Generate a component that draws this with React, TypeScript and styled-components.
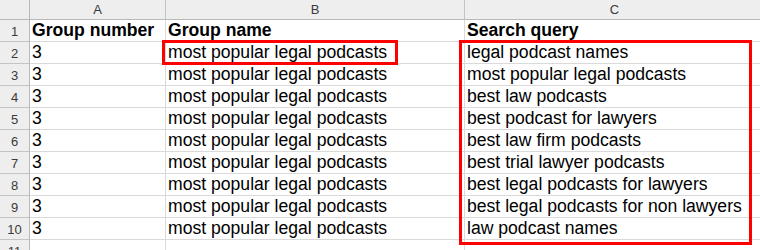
import { Fragment } from "react";
import { createGlobalStyle, styled } from "styled-components";

const rows = [
  "legal podcast names",
  "most popular legal podcasts",
  "best law podcasts",
  "best podcast for lawyers",
  "best law firm podcasts",
  "best trial lawyer podcasts",
  "best legal podcasts for lawyers",
  "best legal podcasts for non lawyers",
  "law podcast names",
];

const GlobalStyle = createGlobalStyle`
  html, body {
    margin: 0;
    padding: 0;
    background: #ffffff;
    overflow: hidden;
  }
  * { box-sizing: border-box; }
`;

const Sheet = styled.div`
  position: relative;
  width: 760px;
  height: 250px;
  overflow: hidden;
  display: grid;
  grid-template-columns: 30px 136px 299px 300px;
  grid-template-rows: 20px repeat(11, 22px);
  font-family: "Liberation Sans", Arial, sans-serif;
  color: #000000;
`;

const Corner = styled.div`
  background: #eeeeee;
  border-right: 1px solid #b8b8b8;
  border-bottom: 1px solid #b8b8b8;
`;

const ColHead = styled.div`
  background: #eeeeee;
  border-right: 1px solid #c4c4c4;
  border-bottom: 1px solid #b8b8b8;
  display: flex;
  align-items: center;
  justify-content: center;
  font-size: 13px;
  color: #3a3a3a;
`;

const RowHead = styled.div`
  background: #eeeeee;
  border-right: 1px solid #b8b8b8;
  border-bottom: 1px solid #c4c4c4;
  display: flex;
  align-items: center;
  justify-content: center;
  font-size: 13px;
  color: #3a3a3a;
  padding-top: 1px;
`;

const Cell = styled.div<{ $bold?: boolean }>`
  border-right: 1px solid #dadada;
  border-bottom: 1px solid #dadada;
  display: flex;
  align-items: flex-end;
  padding: 0 2px 1px 2px;
  font-size: 17.6px;
  line-height: 20px;
  font-weight: ${(p) => (p.$bold ? 700 : 400)};
  white-space: nowrap;
`;

// red selection frames drawn over the cells
const Highlight = styled.div`
  position: absolute;
  border: 3px solid #ff0000;
  pointer-events: none;
`;

export default function App() {
  return (
    <>
      <GlobalStyle />
      <Sheet>
        <Corner />
        <ColHead>A</ColHead>
        <ColHead>B</ColHead>
        <ColHead>C</ColHead>

        <RowHead>1</RowHead>
        <Cell $bold>Group number</Cell>
        <Cell $bold>Group name</Cell>
        <Cell $bold>Search query</Cell>

        {rows.map((q, i) => (
          <Fragment key={i}>
            <RowHead>{i + 2}</RowHead>
            <Cell>3</Cell>
            <Cell>most popular legal podcasts</Cell>
            <Cell>{q}</Cell>
          </Fragment>
        ))}

        <RowHead>11</RowHead>
        <Cell />
        <Cell />
        <Cell />

        <Highlight style={{ left: 162, top: 40, width: 236, height: 25 }} />
        <Highlight style={{ left: 459, top: 40, width: 293, height: 205 }} />
      </Sheet>
    </>
  );
}
